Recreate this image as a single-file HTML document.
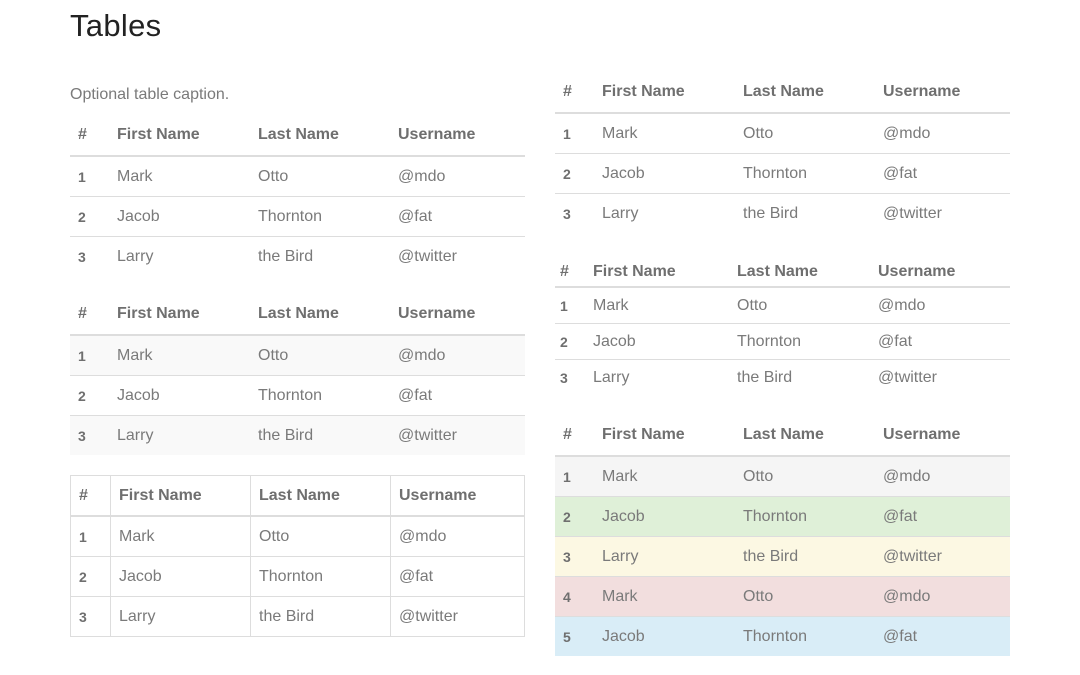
<!DOCTYPE html>
<html><head><meta charset="utf-8"><style>
body{margin:0;background:#fff;font-family:"Liberation Sans",sans-serif;color:#7a7a7a;width:1080px;height:675px;position:relative;overflow:hidden}
h1{position:absolute;left:70px;top:8px;margin:0;font-size:31px;font-weight:normal;color:#222;letter-spacing:0.3px}
.cap{position:absolute;left:70px;top:86px;font-size:16px;color:#7a7a7a}
table{position:absolute;border-collapse:collapse;table-layout:fixed;font-size:16px}
th,td{padding:0 0 0 8px;text-align:left;white-space:nowrap;overflow:hidden}
th{font-weight:bold;color:#6f6f6f}
thead th{height:40px;border-bottom:2px solid #ddd;vertical-align:middle}
tbody td,tbody th{height:39px;border-top:1px solid #ddd}
tbody tr:first-child td,tbody tr:first-child th{border-top:0;height:39px}
tbody th{font-size:14px}
.st tbody tr:nth-child(odd){background:#f9f9f9}
.bd th,.bd td{border:1px solid #ddd}
.bd thead th{border-bottom:2px solid #ddd;height:39px}
.bd tbody td,.bd tbody th{height:39px}
.cd thead th{height:28px;padding-left:5px}
.cd td,.cd th{padding-left:5px}
.cd tbody td,.cd tbody th{height:35px}
.cd tbody tr:first-child td,.cd tbody tr:first-child th{height:35px}
.ctx tbody tr:nth-child(1){background:#f5f5f5}
.ctx tbody tr:nth-child(2){background:#dff0d8}
.ctx tbody tr:nth-child(3){background:#fcf8e3}
.ctx tbody tr:nth-child(4){background:#f2dede}
.ctx tbody tr:nth-child(5){background:#d9edf7}
</style></head><body>
<h1>Tables</h1>
<div class="cap">Optional table caption.</div>

<table style="left:70px;top:115px;width:455px">
<colgroup><col style="width:39px"><col style="width:141px"><col style="width:140px"><col style="width:135px"></colgroup>
<thead><tr><th>#</th><th>First Name</th><th>Last Name</th><th>Username</th></tr></thead>
<tbody><tr><th>1</th><td>Mark</td><td>Otto</td><td>@mdo</td></tr>
<tr><th>2</th><td>Jacob</td><td>Thornton</td><td>@fat</td></tr>
<tr><th>3</th><td>Larry</td><td>the Bird</td><td>@twitter</td></tr></tbody></table>

<table class="st" style="left:70px;top:294px;width:455px">
<colgroup><col style="width:39px"><col style="width:141px"><col style="width:140px"><col style="width:135px"></colgroup>
<thead><tr><th>#</th><th>First Name</th><th>Last Name</th><th>Username</th></tr></thead>
<tbody><tr><th>1</th><td>Mark</td><td>Otto</td><td>@mdo</td></tr>
<tr><th>2</th><td>Jacob</td><td>Thornton</td><td>@fat</td></tr>
<tr><th>3</th><td>Larry</td><td>the Bird</td><td>@twitter</td></tr></tbody></table>

<table class="bd" style="left:70px;top:475px;width:454px">
<colgroup><col style="width:40px"><col style="width:140px"><col style="width:140px"><col style="width:134px"></colgroup>
<thead><tr><th>#</th><th>First Name</th><th>Last Name</th><th>Username</th></tr></thead>
<tbody><tr><th>1</th><td>Mark</td><td>Otto</td><td>@mdo</td></tr>
<tr><th>2</th><td>Jacob</td><td>Thornton</td><td>@fat</td></tr>
<tr><th>3</th><td>Larry</td><td>the Bird</td><td>@twitter</td></tr></tbody></table>

<table style="left:555px;top:72px;width:455px">
<colgroup><col style="width:39px"><col style="width:141px"><col style="width:140px"><col style="width:135px"></colgroup>
<thead><tr><th>#</th><th>First Name</th><th>Last Name</th><th>Username</th></tr></thead>
<tbody><tr><th>1</th><td>Mark</td><td>Otto</td><td>@mdo</td></tr>
<tr><th>2</th><td>Jacob</td><td>Thornton</td><td>@fat</td></tr>
<tr><th>3</th><td>Larry</td><td>the Bird</td><td>@twitter</td></tr></tbody></table>

<table class="cd" style="left:555px;top:258px;width:455px">
<colgroup><col style="width:33px"><col style="width:144px"><col style="width:141px"><col style="width:137px"></colgroup>
<thead><tr><th>#</th><th>First Name</th><th>Last Name</th><th>Username</th></tr></thead>
<tbody><tr><th>1</th><td>Mark</td><td>Otto</td><td>@mdo</td></tr>
<tr><th>2</th><td>Jacob</td><td>Thornton</td><td>@fat</td></tr>
<tr><th>3</th><td>Larry</td><td>the Bird</td><td>@twitter</td></tr></tbody></table>

<table class="ctx" style="left:555px;top:415px;width:455px">
<colgroup><col style="width:39px"><col style="width:141px"><col style="width:140px"><col style="width:135px"></colgroup>
<thead><tr><th>#</th><th>First Name</th><th>Last Name</th><th>Username</th></tr></thead>
<tbody><tr><th>1</th><td>Mark</td><td>Otto</td><td>@mdo</td></tr>
<tr><th>2</th><td>Jacob</td><td>Thornton</td><td>@fat</td></tr>
<tr><th>3</th><td>Larry</td><td>the Bird</td><td>@twitter</td></tr>
<tr><th>4</th><td>Mark</td><td>Otto</td><td>@mdo</td></tr>
<tr><th>5</th><td>Jacob</td><td>Thornton</td><td>@fat</td></tr></tbody></table>
</body></html>
